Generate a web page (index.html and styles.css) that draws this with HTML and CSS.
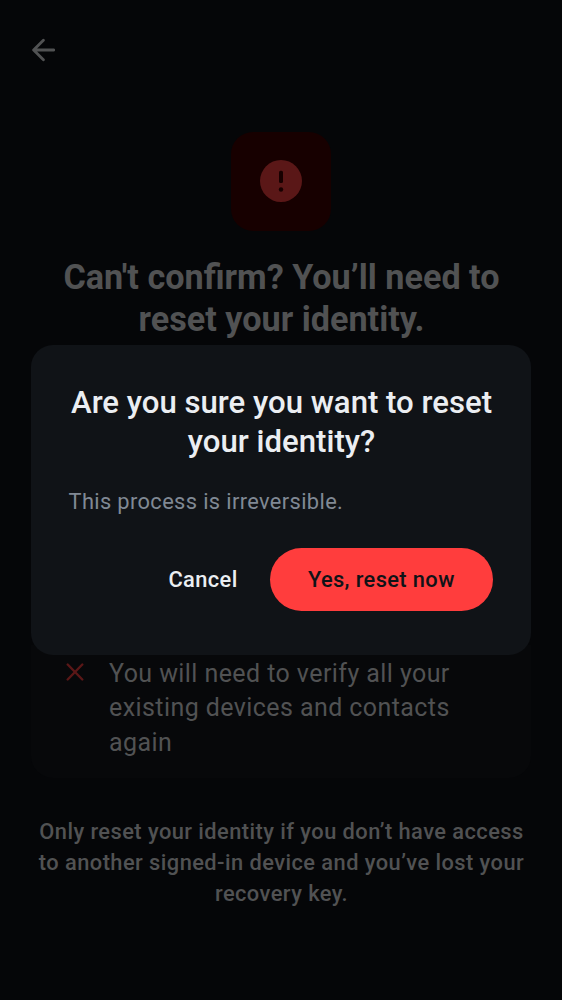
FILE: index.html
```
<!DOCTYPE html>
<html lang="en">
<head>
<meta charset="utf-8">
<title>Reset identity</title>
<link rel="stylesheet" href="styles.css">
</head>
<body>
<main class="screen">
  <header class="bar">
    <svg class="back" viewBox="0 0 24 24"><path d="M12.400 2.300 2.600 12l9.800 9.700M3 12h19.700"/></svg>
  </header>
  <div class="hero">
    <svg class="alert" viewBox="0 0 42 42"><circle class="disc" cx="21" cy="21" r="21"/><rect x="19" y="10.700" width="4" height="12.300" rx="1.500"/><circle cx="21" cy="29.500" r="2.200"/></svg>
  </div>
  <h1 class="title"><span>Can't confirm? You’ll need to</span><br><span>reset your identity.</span></h1>
  <section class="card">
    <svg class="cross" viewBox="0 0 18 18"><path d="m1.700 1.500 14.600 15m0-15-14.600 15"/></svg>
    <p class="item"><span>You will need to verify all your</span><br><span>existing devices and contacts</span><br><span>again</span></p>
  </section>
  <p class="note"><span>Only reset your identity if you don’t have access</span><br><span>to another signed-in device and you’ve lost your</span><br><span>recovery key.</span></p>
</main>
<div class="overlay">
  <section class="dialog" role="dialog">
    <h2 class="question"><span>Are you sure you want to reset</span><br><span>your identity?</span></h2>
    <p class="warning">This process is irreversible.</p>
    <div class="actions">
      <button class="button">Cancel</button>
      <button class="button danger">Yes, reset now</button>
    </div>
  </section>
</div>
</body>
</html>
```
FILE: styles.css
```
* { box-sizing: border-box; }
body { margin: 0; background: #050608; font-family: Roboto, sans-serif; color: #515253; }
h1, h2, p { margin: 0; white-space: nowrap; }
.screen { height: 1000px; padding: 0 31px; display: flex; flex-direction: column; }
.bar { height: 132px; padding-top: 38px; }
.back { display: block; width: 24px; height: 24px; fill: none; stroke: #515253; stroke-width: 2.800; stroke-linecap: round; stroke-linejoin: round; }
.hero { width: 100px; height: 99px; align-self: center; border-radius: 22px; background: #170000; display: flex; align-items: center; justify-content: center; }
.alert { width: 42px; height: 42px; margin-top: -.5px; fill: #170000; }
.disc { fill: #5a1717; }
.title { margin-top: 25px; padding-left: 1px; text-align: center; font-size: 34.200px; line-height: 42px; font-weight: 700; }
.card { margin-top: 305px; height: 133px; padding: 12px 36px 12px 35px; display: flex; gap: 25px; align-items: flex-start; border-radius: 0 0 22px 22px; background: #07080a; }
.cross { width: 18px; height: 18px; margin-top: 6px; fill: none; stroke: #5a1717; stroke-width: 2.400; stroke-linecap: round; }
.item { font-size: 25px; line-height: 34.400px; letter-spacing: .42px; }
.note { margin-top: 38px; padding-left: 1px; text-align: center; font-size: 21.850px; line-height: 31.200px; font-weight: 500; letter-spacing: .44px; }
.overlay { position: absolute; inset: 0; padding: 345px 31px 0; }
.dialog { height: 310px; padding: 38px; border-radius: 22px; background: #101317; display: flex; flex-direction: column; }
.question { padding-left: 1px; color: #ebeef2; text-align: center; font-size: 31.150px; line-height: 39px; font-weight: 500; }
.warning { margin-top: 25px; margin-left: -.5px; color: #808994; font-size: 21.850px; line-height: 31px; letter-spacing: .36px; }
.actions { margin-top: 31.400px; display: flex; justify-content: flex-end; }
.button { height: 62.600px; border: 0; padding: 0 32px; border-radius: 32px; background: none; color: #ebeef2; font: 500 21.850px/31px Roboto, sans-serif; letter-spacing: .38px; white-space: nowrap; }
.danger { width: 223.400px; padding: 0; background: #ff3d3d; color: #101317; }
```
